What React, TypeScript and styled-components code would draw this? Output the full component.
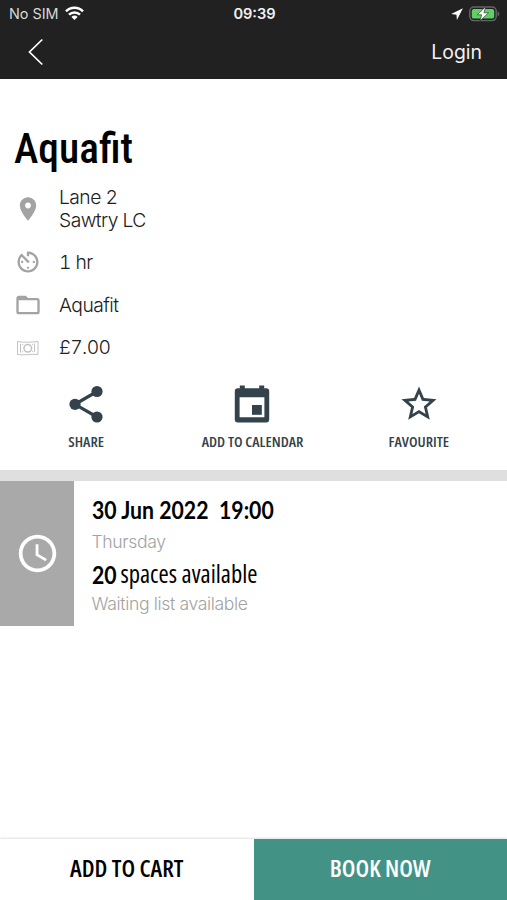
import React from 'react';
import styled, { createGlobalStyle } from 'styled-components';

const GlobalStyle = createGlobalStyle`
  * { box-sizing: border-box; }
  body { margin: 0; background: #fff; }
`;

const ink = '#33424b';
const system = 'Inter, sans-serif';
const condensed = '"Open Sans", sans-serif';

const Screen = styled.div`
  display: flex;
  flex-direction: column;
  width: 507px;
  height: 900px;
  overflow: hidden;
  background: #fff;
  font-family: ${system};
  white-space: nowrap;
`;

const Header = styled.header`
  flex: none;
  height: 79px;
  background: #212121;
  color: #f2f2f2;
`;

const StatusBar = styled.div`
  display: grid;
  grid-template-columns: 1fr auto 1fr;
  align-items: center;
  height: 27px;
  padding: 0 7px 0 9px;
  font-size: 14.4px;
`;

const StatusGroup = styled.div<{ $end?: boolean }>`
  display: flex;
  align-items: center;
  justify-content: ${(p) => (p.$end ? 'flex-end' : 'flex-start')};
  gap: 6px;
  color: #d8d8d8;
`;

const Clock = styled.time`
  font-weight: 600;
  font-size: 14.6px;
`;

const NavBar = styled.nav`
  display: flex;
  align-items: center;
  justify-content: space-between;
  height: 50px;
  padding: 0 25px 0 28px;
`;

const NavButton = styled.button`
  display: flex;
  padding: 0;
  border: 0;
  background: none;
  color: inherit;
  font: 400 19.4px ${system};
`;

const Details = styled.section`
  flex: none;
  height: 391px;
  padding: 43px 14px 0;
`;

const Title = styled.h1`
  margin: 0 0 0 -0.5px;
  height: 54px;
  font: 500 43.2px/54px Roboto, sans-serif;
  font-stretch: 75%;
  color: #000;
  transform: scaleX(0.96);
  transform-origin: left;
`;

const InfoList = styled.ul`
  margin: 2px 0 0;
  padding: 0;
  list-style: none;
`;

const InfoRow = styled.li<{ $tall?: boolean }>`
  display: flex;
  align-items: center;
  gap: 17px;
  height: ${(p) => (p.$tall ? 64 : 42.8)}px;
  padding-bottom: ${(p) => (p.$tall ? 2 : 0)}px;
  margin-bottom: ${(p) => (p.$tall ? -1 : 0)}px;
  color: #202020;
  font-weight: 300;
  font-size: 19.3px;
  font-variant-numeric: tabular-nums;
  line-height: 23px;
  letter-spacing: -0.55px;

  svg {
    flex: none;
    color: #a3a3a3;
  }
`;

const Actions = styled.div`
  display: grid;
  grid-template-columns: repeat(3, 1fr);
  margin: 12px -9px 0 -11px;
`;

const Action = styled.button`
  display: flex;
  flex-direction: column;
  align-items: center;
  padding: 0;
  border: 0;
  background: none;
  color: ${ink};
  font: 600 15.1px/20px ${condensed};
  font-stretch: 75%;
`;

const ActionIcon = styled.span`
  display: grid;
  place-items: center;
  height: 46px;
  margin-bottom: 4px;
`;

const Divider = styled.div`
  flex: none;
  height: 11px;
  background: #dfdfdf;
`;

const Session = styled.section`
  display: flex;
  flex: none;
  height: 145px;
`;

const SessionIcon = styled.div`
  display: grid;
  place-items: center;
  width: 74px;
  background: #a9a9a9;
  color: #fff;
`;

const SessionText = styled.div`
  padding: 12px 0 0 17.5px;
`;

const SessionLine = styled.p<{ $h: number }>`
  display: flex;
  margin: 0;
  height: ${(p) => p.$h}px;
  font: 400 24.6px/32px ${condensed};
  font-stretch: 75%;
  color: #000;
`;

const Strong = styled.strong<{ $w: number }>`
  display: inline-block;
  width: ${(p) => p.$w}px;
  font: 700 25px/32px Lato, sans-serif;
  transform: scaleX(0.85);
  transform-origin: left;
`;

const Hint = styled.p<{ $h: number }>`
  margin: 0;
  height: ${(p) => p.$h}px;
  font-weight: 300;
  font-size: 17.6px;
  line-height: 33px;
  letter-spacing: -0.36px;
  color: #a2a2a2;
`;

const Footer = styled.footer`
  display: grid;
  grid-template-columns: 1fr 1fr;
  flex: none;
  height: 61px;
  margin-top: auto;
  box-shadow: 0 -1px 2px rgba(0, 0, 0, 0.12);
`;

const FooterButton = styled.button<{ $primary?: boolean }>`
  padding: 0 0 3px;
  border: 0;
  background: ${(p) => (p.$primary ? '#429386' : '#fff')};
  color: ${(p) => (p.$primary ? '#fff' : '#000')};
  font: 600 24px/30px ${condensed};
  font-stretch: 75%;
`;

const Glyph = ({ d, size }: { d: string; size: number }) => (
  <svg width={size} height={size} viewBox="0 0 24 24" fill="currentColor">
    <path d={d} />
  </svg>
);

const paths = {
  place:
    'M12 2C8.13 2 5 5.13 5 9c0 5.25 7 13 7 13s7-7.75 7-13c0-3.87-3.13-7-7-7zm0 9.5c-1.38 0-2.5-1.12-2.5-2.5s1.12-2.5 2.5-2.5 2.5 1.12 2.5 2.5-1.12 2.5-2.5 2.5z',
  timer:
    'M11 17c0 .55.45 1 1 1s1-.45 1-1-.45-1-1-1-1 .45-1 1zm0-14v4h2V5.08c3.39.49 6 3.39 6 6.92 0 3.87-3.13 7-7 7s-7-3.13-7-7c0-1.68.59-3.22 1.58-4.42L12 13l1.41-1.41-6.8-6.8v.02C4.42 6.45 3 9.05 3 12c0 4.97 4.02 9 9 9 4.97 0 9-4.03 9-9s-4.03-9-9-9h-1zm7 9c0-.55-.45-1-1-1s-1 .45-1 1 .45 1 1 1 1-.45 1-1zM6 12c0 .55.45 1 1 1s1-.45 1-1-.45-1-1-1-1 .45-1 1z',
  folder:
    'M20 6h-8l-2-2H4c-1.1 0-1.99.9-1.99 2L2 18c0 1.1.9 2 2 2h16c1.1 0 2-.9 2-2V8c0-1.1-.9-2-2-2zm0 12H4V8h16v10z',
  star:
    'M22 9.24l-7.19-.62L12 2 9.19 8.63 2 9.24l5.46 4.73L5.82 21 12 17.27 18.18 21l-1.63-7.03L22 9.24zM12 15.4l-3.76 2.27 1-4.28-3.32-2.88 4.38-.38L12 6.1l1.71 4.04 4.38.38-3.32 2.88 1 4.28L12 15.4z',
  schedule:
    'M11.99 2C6.47 2 2 6.48 2 12s4.47 10 9.99 10C17.52 22 22 17.52 22 12S17.52 2 11.99 2zM12 20c-4.42 0-8-3.58-8-8s3.58-8 8-8 8 3.58 8 8-3.58 8-8 8zm.5-13H11v6l5.25 3.15.75-1.23-4.5-2.67z',
};

const ShareIcon = () => (
  <svg width="36" height="38" viewBox="0 0 36 38" fill="currentColor">
    <path d="M29 6.5 7 19.3 29 32" fill="none" stroke="currentColor" strokeWidth="3.2" />
    <circle cx="29" cy="6.5" r="5.6" />
    <circle cx="7" cy="19.3" r="5.6" />
    <circle cx="29" cy="32" r="5.6" />
  </svg>
);

const CalendarIcon = () => (
  <svg width="36" height="38" viewBox="0 0 36 38" fill="currentColor">
    <path
      fillRule="evenodd"
      d="M5.8.6h5v2.6h14.4V.6h5v2.6h2a3 3 0 0 1 3 3v28.2a3 3 0 0 1-3 3H3.8a3 3 0 0 1-3-3V6.2a3 3 0 0 1 3-3h2zM5.6 12.3v19.9h24.8V12.3z"
    />
    <rect x="18" y="20" width="9.8" height="9.8" />
  </svg>
);

const WifiIcon = () => (
  <svg width="19" height="15" viewBox="0 0 19 15" fill="none" stroke="#fff" strokeWidth="2.5">
    <path d="M1 5.4a12 12 0 0 1 17 0" />
    <path d="M4 8.7a7.8 7.8 0 0 1 11 0" />
    <path d="M9.5 14 6.4 10.9a4.4 4.4 0 0 1 6.2 0z" fill="#fff" stroke="none" />
  </svg>
);

const LocationIcon = () => (
  <svg width="12" height="12" viewBox="0 0 12 12" fill="#fff">
    <path d="M11.9.2.2 5.9l5.3.8.4 5.2z" />
  </svg>
);

const BatteryIcon = () => (
  <svg width="31" height="16" viewBox="0 0 31 16">
    <rect x="0.8" y="1" width="26.4" height="13.6" rx="4" fill="#212121" stroke="#666" strokeWidth="1.4" />
    <path d="M28.6 5.2c2.2.9 2.2 4.3 0 5.2z" fill="#666" />
    <rect x="2.8" y="3" width="22.4" height="9.6" rx="2.2" fill="#5fd066" />
    <path d="M16.8.6 8.2 8.8h4.5L11 15l8.5-8.2h-4.6z" fill="#fff" stroke="#212121" strokeWidth="0.6" />
  </svg>
);

const BackIcon = () => (
  <svg width="16" height="28" viewBox="0 0 16 28" fill="none" stroke="#fff" strokeWidth="1.7">
    <path d="M14.3 1.5 1.5 14l12.8 12.5" />
  </svg>
);

const MoneyIcon = () => (
  <svg width="28" height="28" viewBox="0 0 28 28" fill="none" stroke="#c2c2c2" strokeWidth="1">
    <path d="M3.5 7.5c6 1.4 14 .6 20.5 0v13c-6.5-.6-14.5 1-20.5 0z" />
    <circle cx="13.8" cy="14.2" r="3.8" strokeWidth="1.5" />
    <path d="M6.5 9.8v8.7M20.5 9.5v8.5M8.7 10v1.2M8.7 17.2v1.2M18.6 9.7v1.2M18.6 17v1.2" />
  </svg>
);

export default function App() {
  return (
    <>
      <GlobalStyle />
      <Screen>
        <Header>
          <StatusBar>
            <StatusGroup>
              No SIM <WifiIcon />
            </StatusGroup>
            <Clock>09:39</Clock>
            <StatusGroup $end>
              <LocationIcon />
              <BatteryIcon />
            </StatusGroup>
          </StatusBar>
          <NavBar>
            <NavButton aria-label="Back">
              <BackIcon />
            </NavButton>
            <NavButton>Login</NavButton>
          </NavBar>
        </Header>

        <Details>
          <Title>Aquafit</Title>
          <InfoList>
            <InfoRow $tall>
              <Glyph d={paths.place} size={28} />
              <span>
                Lane 2<br />
                Sawtry LC
              </span>
            </InfoRow>
            <InfoRow>
              <Glyph d={paths.timer} size={28} />
              1 hr
            </InfoRow>
            <InfoRow>
              <Glyph d={paths.folder} size={28} />
              Aquafit
            </InfoRow>
            <InfoRow>
              <MoneyIcon />
              £7.00
            </InfoRow>
          </InfoList>
          <Actions>
            <Action>
              <ActionIcon>
                <ShareIcon />
              </ActionIcon>
              SHARE
            </Action>
            <Action>
              <ActionIcon>
                <CalendarIcon />
              </ActionIcon>
              ADD TO CALENDAR
            </Action>
            <Action>
              <ActionIcon>
                <Glyph d={paths.star} size={42} />
              </ActionIcon>
              FAVOURITE
            </Action>
          </Actions>
        </Details>

        <Divider />

        <Session>
          <SessionIcon>
            <Glyph d={paths.schedule} size={45} />
          </SessionIcon>
          <SessionText>
            <SessionLine $h={32}>
              <Strong $w={127}>30 Jun 2022</Strong>
              <Strong $w={60}>19:00</Strong>
            </SessionLine>
            <Hint $h={33}>Thursday</Hint>
            <SessionLine $h={29}>
              <Strong $w={29}>20</Strong>
              spaces available
            </SessionLine>
            <Hint $h={32}>Waiting list available</Hint>
          </SessionText>
        </Session>

        <Footer>
          <FooterButton>ADD TO CART</FooterButton>
          <FooterButton $primary>BOOK NOW</FooterButton>
        </Footer>
      </Screen>
    </>
  );
}
